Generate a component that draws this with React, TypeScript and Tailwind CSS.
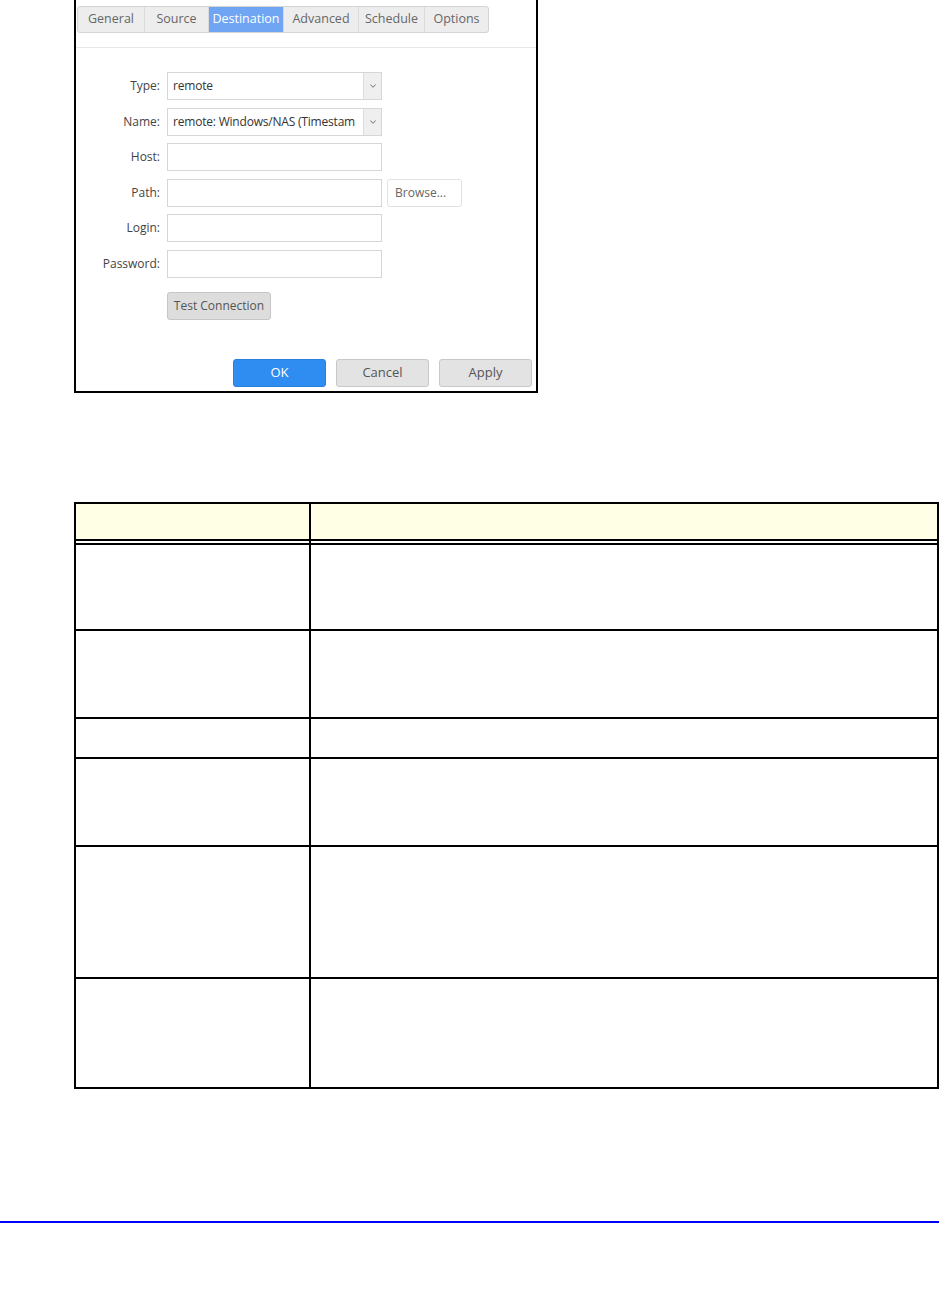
import { ChevronDown } from "lucide-react";

const tabs = [
  { label: "General", w: "w-[66px]" },
  { label: "Source", w: "w-[64px]" },
  { label: "Destination", w: "w-[75px]", active: true },
  { label: "Advanced", w: "w-[75px]" },
  { label: "Schedule", w: "w-[66px]" },
  { label: "Options", w: "w-[64px]" },
];

const fields = [
  { label: "Type:", kind: "select", value: "remote" },
  { label: "Name:", kind: "select", value: "remote: Windows/NAS (Timestam" },
  { label: "Host:", kind: "text" },
  { label: "Path:", kind: "browse" },
  { label: "Login:", kind: "text" },
  { label: "Password:", kind: "text" },
];

// row heights incl. bottom border, read off the screenshot
const rows = ["h-[86px]", "h-[88px]", "h-[40px]", "h-[88px]", "h-[132px]", "h-[110px]"];

function Field({ f }: { f: (typeof fields)[number] }) {
  return (
    <div className="flex items-center h-[28px]">
      <div className="w-[84px] text-right text-[12px] text-[#444]">{f.label}</div>
      <div className="ml-[7px] w-[215px] h-[28px] border border-[#d6d6d6] bg-white flex items-center overflow-hidden">
        {f.kind === "select" && (
          <>
            <span className="flex-1 min-w-0 pl-[5px] text-[12px] tracking-[-0.2px] text-[#333] whitespace-nowrap">
              {f.value}
            </span>
            <span className="w-[18px] shrink-0 h-full bg-[#efefef] border-l border-[#dcdcdc] flex items-center justify-center text-[#888]">
              <ChevronDown size={10} strokeWidth={2.5} />
            </span>
          </>
        )}
      </div>
      {f.kind === "browse" && (
        <button className="ml-[5px] w-[75px] h-[28px] border border-[#e2e2e2] rounded-[3px] bg-white text-[12px] text-[#666] text-left pl-[7px]">
          Browse...
        </button>
      )}
    </div>
  );
}

export default function App() {
  return (
    <div className="w-[939px] h-[1292px] bg-white font-['Open_Sans',sans-serif]">
      {/* dialog */}
      <div className="ml-[74px] w-[464px] h-[393px] border-x-2 border-b-2 border-black flex flex-col">
        <div className="pt-[6px] pl-[1px]">
          <div className="flex w-fit h-[27px] border border-[#d4d4d4] rounded-[3px] bg-[#ededed] overflow-hidden">
            {tabs.map((t, i) => (
              <div
                key={t.label}
                className={`${t.w} flex items-center justify-center text-[12.5px] ${
                  t.active ? "bg-[#6fa5f3] text-white" : "text-[#666]"
                } ${i > 0 ? "border-l border-[#dadada]" : ""}`}
              >
                {t.label}
              </div>
            ))}
          </div>
        </div>
        <div className="mt-[14px] border-t border-[#e8e8e8]" />

        <div className="mt-[24px] flex flex-col gap-[7.5px]">
          {fields.map((f) => (
            <Field key={f.label} f={f} />
          ))}
        </div>

        <div className="mt-[14px] pl-[91px]">
          <button className="w-[104px] h-[28px] bg-[#dddddd] border border-[#c6c6c6] rounded-[3px] text-[12px] text-[#555]">
            Test Connection
          </button>
        </div>

        <div className="mt-auto pb-[4px] pr-[4px] flex justify-end gap-[10px]">
          <button className="w-[93px] h-[28px] rounded-[3px] bg-[#2f8df2] border border-[#2a80e0] text-white text-[13px]">
            OK
          </button>
          <button className="w-[93px] h-[28px] rounded-[3px] bg-[#e3e3e3] border border-[#c8c8c8] text-[#555] text-[13px]">
            Cancel
          </button>
          <button className="w-[93px] h-[28px] rounded-[3px] bg-[#e3e3e3] border border-[#c8c8c8] text-[#555] text-[13px]">
            Apply
          </button>
        </div>
      </div>

      {/* table */}
      <div className="mt-[109px] ml-[74px] w-[865px] border-x-2 border-t-2 border-black">
        <div className="grid grid-cols-[235px_1fr] h-[37px] bg-[#ffffe6] border-b-2 border-black">
          <div className="border-r-2 border-black" />
          <div />
        </div>
        <div className="grid grid-cols-[235px_1fr] h-[2px]">
          <div className="border-r-2 border-black" />
          <div />
        </div>
        <div className="border-t-2 border-black">
          {rows.map((h, i) => (
            <div key={i} className={`grid grid-cols-[235px_1fr] ${h} border-b-2 border-black`}>
              <div className="border-r-2 border-black" />
              <div />
            </div>
          ))}
        </div>
      </div>

      {/* footer rule */}
      <div className="mt-[132px] h-[2px] bg-[#0000ff]" />
    </div>
  );
}
